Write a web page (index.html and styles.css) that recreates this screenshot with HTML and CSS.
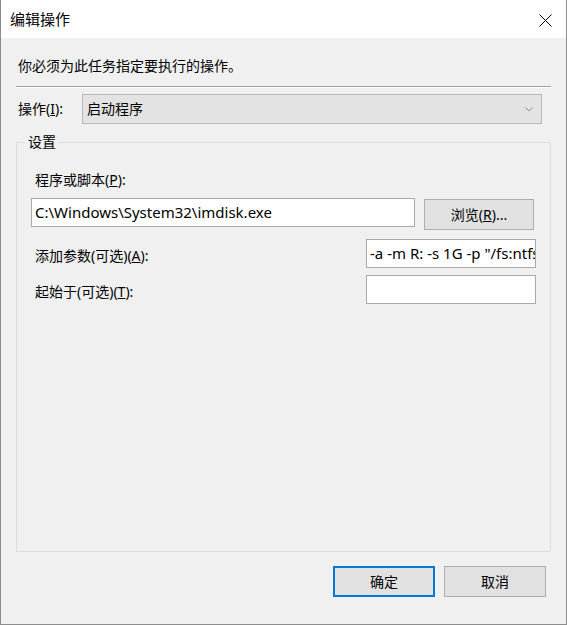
FILE: index.html
```html
<!DOCTYPE html>
<html lang="zh-CN">
<head>
<meta charset="utf-8">
<title>编辑操作</title>
<link rel="stylesheet" href="styles.css">
</head>
<body>
<div class="window">
  <div class="titlebar">
    <span class="title">编辑操作</span>
    <svg class="close" width="13" height="13" viewBox="0 0 13 13" aria-hidden="true">
      <path d="M0.5 0.5 L12.5 12.5 M12.5 0.5 L0.5 12.5" stroke="#000" stroke-width="1" fill="none"/>
    </svg>
  </div>
  <div class="content">
    <p class="intro">你必须为此任务指定要执行的操作。</p>
    <div class="sep"></div>
    <div class="action-row">
      <span class="action-label">操作(<u>I</u>):</span>
      <div class="combo">
        <span class="combo-text">启动程序</span>
        <svg class="chevron" width="8" height="5" viewBox="0 0 8 5" aria-hidden="true">
          <path d="M0.5 0.5 L4 4 L7.5 0.5" stroke="#8a8a8a" stroke-width="1" fill="none"/>
        </svg>
      </div>
    </div>
    <fieldset class="group">
      <legend class="group-title">设置</legend>
      <div class="field-label">程序或脚本(<u>P</u>):</div>
      <div class="path-row">
        <div class="input path-input">C:\Windows\System32\imdisk.exe</div>
        <button class="btn browse">浏览(<u>R</u>)...</button>
      </div>
      <div class="opt-row">
        <span class="opt-label">添加参数(可选)(<u>A</u>):</span>
        <div class="input small-input">-a -m R: -s 1G -p "/fs:ntfs /q /y"</div>
      </div>
      <div class="opt-row opt-row-last">
        <span class="opt-label">起始于(可选)(<u>T</u>):</span>
        <div class="input small-input"></div>
      </div>
    </fieldset>
    <div class="buttons">
      <button class="btn dlg-btn primary">确定</button>
      <button class="btn dlg-btn">取消</button>
    </div>
  </div>
</div>
</body>
</html>
```
FILE: styles.css
```css
html, body {
  margin: 0;
  padding: 0;
  background: #f0f0f0;
}

body {
  font-family: "Noto Sans", "Noto Sans CJK SC", sans-serif;
  font-size: 14px;
  color: #000;
}

.window {
  width: 567px;
  height: 625px;
  box-sizing: border-box;
  border-left: 1px solid #8c8c8c;
  border-right: 1px solid #8c8c8c;
  border-bottom: 1px solid #8c8c8c;
  display: flex;
  flex-direction: column;
  background: #f0f0f0;
}

.titlebar {
  height: 38px;
  flex: none;
  background: #fff;
  display: flex;
  align-items: center;
  justify-content: space-between;
  padding: 0 14px 0 9px;
}

.title {
  font-family: "Noto Sans CJK SC", sans-serif;
  font-size: 15px;
  line-height: 20px;
}

.close {
  display: block;
  margin-top: 2px;
}

.content {
  flex: 1;
  display: flex;
  flex-direction: column;
  padding: 0 15px;
}

.intro {
  margin: 18px 0 0 0;
  padding-left: 2px;
  line-height: 20px;
  height: 20px;
}

.sep {
  margin-top: 10px;
  height: 0;
  border-top: 1px solid #a0a0a0;
  border-bottom: 1px solid #ffffff;
}

.action-row {
  margin-top: 6px;
  height: 30px;
  display: flex;
  align-items: center;
  padding-right: 9px;
}

.action-label {
  width: 64px;
  padding-left: 2px;
  flex: none;
  line-height: 20px;
}

.combo {
  flex: 1;
  height: 30px;
  box-sizing: border-box;
  border: 1px solid #b9b9b9;
  background: #e3e3e3;
  display: flex;
  align-items: center;
  justify-content: space-between;
  padding: 0 8px 0 4px;
}

.combo-text {
  line-height: 20px;
}

.chevron {
  display: block;
}

.group {
  margin: 8px 0 0 0;
  padding: 0 14px 0 14px;
  border: 1px solid #dcdcdc;
  min-width: 0;
  height: 420px;
  box-sizing: border-box;
}

.group-title {
  margin-left: -6px;
  padding: 0 3px;
  line-height: 20px;
}

.field-label {
  margin-top: 18px;
  padding-left: 4px;
  line-height: 20px;
}

.path-row {
  margin-top: 8px;
  display: flex;
  align-items: flex-start;
  padding-right: 2px;
}

.input {
  box-sizing: border-box;
  height: 29px;
  border: 1px solid #a9a9a9;
  background: #fff;
  padding: 0 3px;
  font-size: 15px;
  line-height: 27px;
  white-space: nowrap;
  overflow: hidden;
}

.path-input {
  width: 384px;
  flex: none;
}

.btn {
  font-family: "Noto Sans", "Noto Sans CJK SC", sans-serif;
  font-size: 14px;
  color: #000;
  background: #e1e1e1;
  border: 1px solid #adadad;
  box-sizing: border-box;
  padding: 0;
  line-height: 20px;
  cursor: default;
}

.browse {
  margin-left: 9px;
  margin-top: 1px;
  width: 110px;
  height: 31px;
  flex: none;
}

.opt-row {
  margin-top: 9px;
  display: flex;
  align-items: center;
}

.opt-row-last {
  margin-top: 7px;
}

.opt-label {
  flex: 1;
  padding-left: 4px;
  padding-top: 4px;
  line-height: 20px;
}

.small-input {
  width: 170px;
  flex: none;
}

.buttons {
  margin-top: 14px;
  display: flex;
  justify-content: flex-end;
  gap: 9px;
  padding-right: 5px;
}

.dlg-btn {
  width: 102px;
  height: 31px;
}

.primary {
  border: 2px solid #0078d7;
}
```
